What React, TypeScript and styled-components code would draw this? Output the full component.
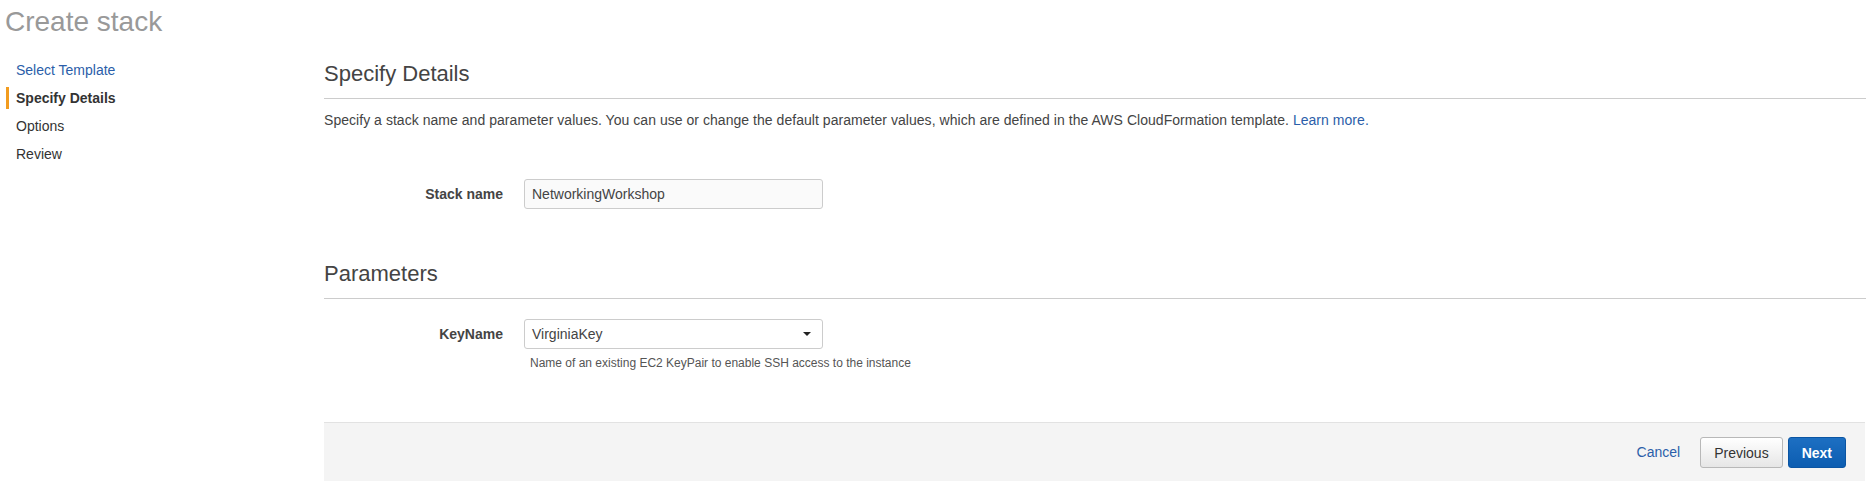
import React from 'react';
import styled, { createGlobalStyle } from 'styled-components';

const GlobalStyle = createGlobalStyle`
  html, body {
    margin: 0;
    padding: 0;
    background: #ffffff;
  }
  body {
    font-family: 'Liberation Sans', Arial, Helvetica, sans-serif;
    color: #444444;
    font-size: 14px;
  }
`;

const Page = styled.div`
  width: 1870px;
  height: 481px;
  overflow: hidden;
`;

const PageTitle = styled.h1`
  margin: 6px 0 0 5px;
  font-size: 28px;
  line-height: 32px;
  font-weight: normal;
  color: #999999;
`;

const Layout = styled.div`
  display: flex;
`;

const Sidebar = styled.nav`
  width: 324px;
  flex: none;
  padding-top: 18px;
`;

const StepItem = styled.div<{ active?: boolean; link?: boolean }>`
  margin: 3px 0 6px 6px;
  padding-left: 7px;
  border-left: 3px solid ${(props) => (props.active ? '#f29c1f' : 'transparent')};
  line-height: 22px;
  font-size: 14px;
  font-weight: ${(props) => (props.active ? 'bold' : 'normal')};
  color: ${(props) => (props.link ? '#2b5ea9' : '#333333')};
`;

const Main = styled.main`
  flex: 1;
  margin-right: 4px;
  padding-top: 23px;
`;

const SectionHeading = styled.h2`
  margin: 0;
  padding-bottom: 11px;
  border-bottom: 1px solid #cccccc;
  font-size: 22px;
  line-height: 26px;
  font-weight: normal;
  color: #444444;
`;

const Description = styled.p`
  margin: 11px 0 0;
  line-height: 20px;
  letter-spacing: 0.04px;
  color: #444444;
`;

const Link = styled.a`
  color: #2b5ea9;
  text-decoration: none;
`;

const FieldRow = styled.div<{ top: number }>`
  display: flex;
  align-items: flex-start;
  margin-top: ${(props) => props.top}px;
`;

const FieldLabel = styled.label`
  width: 179px;
  flex: none;
  text-align: right;
  font-weight: bold;
  line-height: 30px;
  color: #444444;
`;

const FieldControl = styled.div`
  margin-left: 21px;
  width: 299px;
`;

const TextBox = styled.div`
  box-sizing: border-box;
  height: 30px;
  padding: 0 7px;
  border: 1px solid #cccccc;
  border-radius: 3px;
  background: #fafafa;
  line-height: 28px;
  color: #444444;
`;

const SelectBox = styled(TextBox)`
  display: flex;
  align-items: center;
  justify-content: space-between;
  padding-right: 11px;
  background: #ffffff;
`;

const HelpText = styled.div`
  margin-top: 7px;
  padding-left: 6px;
  font-size: 12px;
  line-height: 14px;
  color: #555555;
  white-space: nowrap;
`;

const SecondSection = styled.section`
  margin-top: 52px;
`;

const Footer = styled.footer`
  margin-top: 52px;
  margin-right: 1px;
  height: 80px;
  border-top: 1px solid #e2e2e2;
  background: #f4f4f4;
  display: flex;
  justify-content: flex-end;
  align-items: flex-start;
  padding: 14px 19px 0 0;
  box-sizing: border-box;
`;

const CancelLink = styled(Link)`
  line-height: 31px;
  margin-right: 20px;
`;

const Button = styled.button<{ primary?: boolean }>`
  height: 31px;
  padding: 0 13px;
  margin-left: ${(props) => (props.primary ? '5px' : '0')};
  border-radius: 3px;
  font-family: inherit;
  font-size: 14px;
  font-weight: ${(props) => (props.primary ? 'bold' : 'normal')};
  color: ${(props) => (props.primary ? '#ffffff' : '#333333')};
  border: 1px solid ${(props) => (props.primary ? '#0b55a3' : '#b8b8b8')};
  background: ${(props) =>
    props.primary
      ? 'linear-gradient(#1d6fc2, #0c5db1)'
      : 'linear-gradient(#ffffff, #e6e6e6)'};
`;

const Caret = () => (
  <svg width="8" height="4" viewBox="0 0 8 4">
    <polygon points="0,0 8,0 4,4" fill="#222" />
  </svg>
);

export default function App() {
  return (
    <Page>
      <GlobalStyle />
      <PageTitle>Create stack</PageTitle>
      <Layout>
        <Sidebar>
          <StepItem link>Select Template</StepItem>
          <StepItem active>Specify Details</StepItem>
          <StepItem>Options</StepItem>
          <StepItem>Review</StepItem>
        </Sidebar>
        <Main>
          <section>
            <SectionHeading>Specify Details</SectionHeading>
            <Description>
              Specify a stack name and parameter values. You can use or change the default parameter values,
              which are defined in the AWS CloudFormation template. <Link href="#">Learn more.</Link>
            </Description>
            <FieldRow top={49}>
              <FieldLabel>Stack name</FieldLabel>
              <FieldControl>
                <TextBox>NetworkingWorkshop</TextBox>
              </FieldControl>
            </FieldRow>
          </section>
          <SecondSection>
            <SectionHeading>Parameters</SectionHeading>
            <FieldRow top={20}>
              <FieldLabel>KeyName</FieldLabel>
              <FieldControl>
                <SelectBox>
                  <span>VirginiaKey</span>
                  <Caret />
                </SelectBox>
                <HelpText>Name of an existing EC2 KeyPair to enable SSH access to the instance</HelpText>
              </FieldControl>
            </FieldRow>
          </SecondSection>
          <Footer>
            <CancelLink href="#">Cancel</CancelLink>
            <Button>Previous</Button>
            <Button primary>Next</Button>
          </Footer>
        </Main>
      </Layout>
    </Page>
  );
}
